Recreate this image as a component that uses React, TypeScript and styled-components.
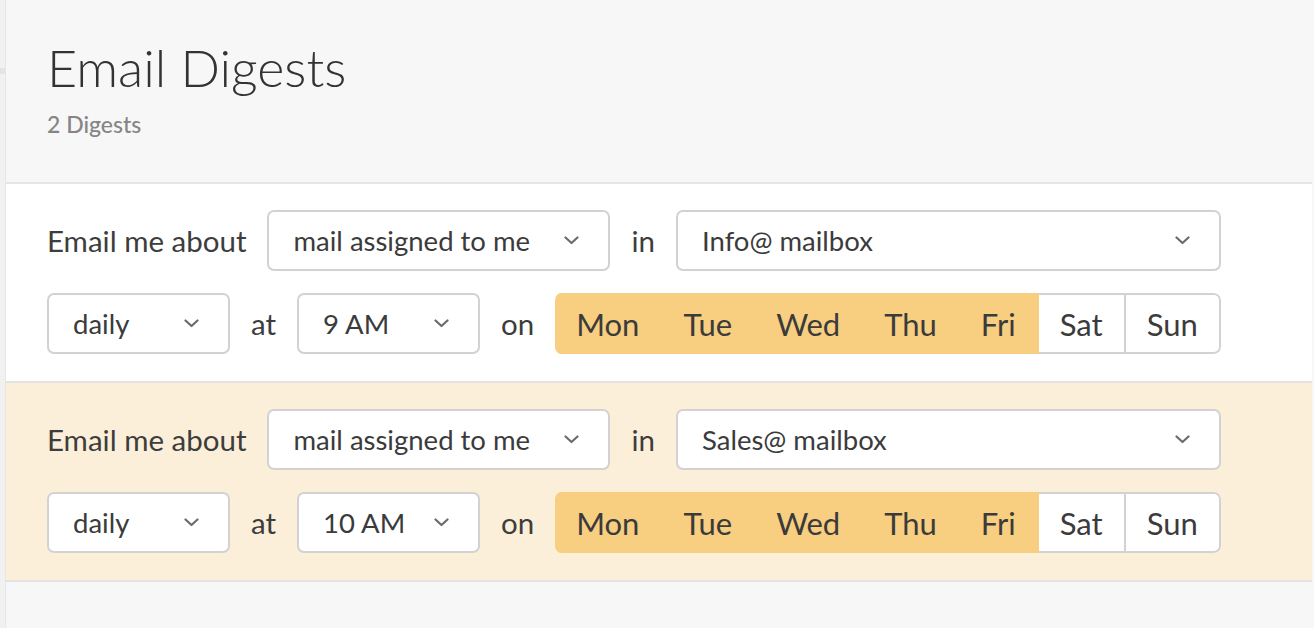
import React from 'react';
import styled, { createGlobalStyle } from 'styled-components';

const GlobalStyle = createGlobalStyle`
  html, body {
    margin: 0;
    padding: 0;
    background: #f7f7f7;
    font-family: Lato, "Open Sans", sans-serif;
    color: #3b3b3b;
  }
  #root {
    height: 628px;
    overflow: hidden;
  }
`;

const days = ['Mon', 'Tue', 'Wed', 'Thu', 'Fri', 'Sat', 'Sun'];

interface Digest {
  about: string;
  mailbox: string;
  frequency: string;
  time: string;
  active: string[];
  highlight?: boolean;
}

const digests: Digest[] = [
  {
    about: 'mail assigned to me',
    mailbox: 'Info@ mailbox',
    frequency: 'daily',
    time: '9 AM',
    active: ['Mon', 'Tue', 'Wed', 'Thu', 'Fri'],
  },
  {
    about: 'mail assigned to me',
    mailbox: 'Sales@ mailbox',
    frequency: 'daily',
    time: '10 AM',
    active: ['Mon', 'Tue', 'Wed', 'Thu', 'Fri'],
    highlight: true,
  },
];

const Chevron = () => (
  <svg width="15" height="9" viewBox="0 0 15 9" fill="none">
    <path d="M1.5 1.5l6 5.5 6-5.5" stroke="#6b6b6b" strokeWidth="2.2" strokeLinecap="round" strokeLinejoin="round" />
  </svg>
);

const Select: React.FC<{ value: string; width: number }> = ({ value, width }) => (
  <StyledSelect $width={width}>
    <span>{value}</span>
    <Chevron />
  </StyledSelect>
);

const DigestRow: React.FC<{ digest: Digest }> = ({ digest }) => (
  <StyledDigest $highlight={digest.highlight}>
    <StyledLine>
      <StyledLabel>Email me about</StyledLabel>
      <Select value={digest.about} width={343} />
      <StyledWord>in</StyledWord>
      <Select value={digest.mailbox} width={545} />
    </StyledLine>
    <StyledLine>
      <Select value={digest.frequency} width={183} />
      <StyledWord>at</StyledWord>
      <Select value={digest.time} width={183} />
      <StyledWord>on</StyledWord>
      <StyledDays>
        {days.map((d) => (
          <StyledDay key={d} $active={digest.active.includes(d)}>
            {d}
          </StyledDay>
        ))}
      </StyledDays>
    </StyledLine>
  </StyledDigest>
);

const App: React.FC = () => {
  return (
    <>
      <GlobalStyle />
      <StyledPage>
        <StyledSidebar>
          <StyledSidebarMark />
        </StyledSidebar>
        <StyledMain>
          <StyledHeader>
            <StyledTitle>Email Digests</StyledTitle>
            <StyledCount>2 Digests</StyledCount>
          </StyledHeader>
          {digests.map((d, i) => (
            <DigestRow key={i} digest={d} />
          ))}
        </StyledMain>
      </StyledPage>
    </>
  );
};

const StyledPage = styled.div`
  display: flex;
  height: 628px;
`;

const StyledSidebar = styled.div`
  width: 5px;
  flex-shrink: 0;
  background: #f1f1f1;
  border-right: 1px solid #e6e6e6;
  padding-top: 68px;
`;

const StyledSidebarMark = styled.div`
  height: 6px;
  background: #e4e4e4;
`;

const StyledMain = styled.div`
  flex: 1;
  margin-right: 2px;
`;

const StyledHeader = styled.div`
  height: 184px;
  box-sizing: border-box;
  padding: 34px 0 0 41px;
  border-bottom: 2px solid #e6e6e6;
`;

const StyledTitle = styled.h1`
  margin: 0;
  font-family: Lato, sans-serif;
  font-weight: 300;
  font-size: 52px;
  line-height: 66px;
  color: #333;
`;

const StyledCount = styled.div`
  margin-top: 10px;
  font-size: 23px;
  font-weight: 500;
  color: #858585;
`;

const StyledDigest = styled.div<{ $highlight?: boolean }>`
  background: ${(p) => (p.$highlight ? '#fcefd9' : '#ffffff')};
  padding: 26px 0 27px 41px;
  display: flex;
  flex-direction: column;
  gap: 22px;
  border-bottom: 2px solid #e2e2e2;
`;

const StyledLine = styled.div`
  display: flex;
  align-items: center;
  height: 61px;
`;

const StyledLabel = styled.span`
  font-size: 29.5px;
  margin-right: 21px;
  color: #3d3d3d;
`;

const StyledWord = styled.span`
  font-size: 29.5px;
  margin: 0 21px;
  color: #3d3d3d;
`;

const StyledSelect = styled.div<{ $width: number }>`
  width: ${(p) => p.$width}px;
  height: 61px;
  box-sizing: border-box;
  display: flex;
  align-items: center;
  justify-content: space-between;
  padding: 0 29px 0 24px;
  background: #fff;
  border: 2px solid #d2d2d2;
  border-radius: 7px;
  font-size: 27.5px;
  color: #3b3b3b;
`;

const StyledDays = styled.div`
  display: flex;
  height: 61px;
  border-radius: 7px;
  overflow: hidden;
`;

const StyledDay = styled.div<{ $active: boolean }>`
  display: flex;
  align-items: center;
  padding: 0 21px;
  font-size: 31px;
  color: #3b3b3b;
  box-sizing: border-box;
  background: ${(p) => (p.$active ? '#f8ce80' : '#fff')};
  border-top: 2px solid ${(p) => (p.$active ? '#f8ce80' : '#d2d2d2')};
  border-bottom: 2px solid ${(p) => (p.$active ? '#f8ce80' : '#d2d2d2')};
  border-right: 2px solid ${(p) => (p.$active ? '#f8ce80' : '#d2d2d2')};

  &:last-child {
    border-top-right-radius: 7px;
    border-bottom-right-radius: 7px;
  }
`;

export default App;
